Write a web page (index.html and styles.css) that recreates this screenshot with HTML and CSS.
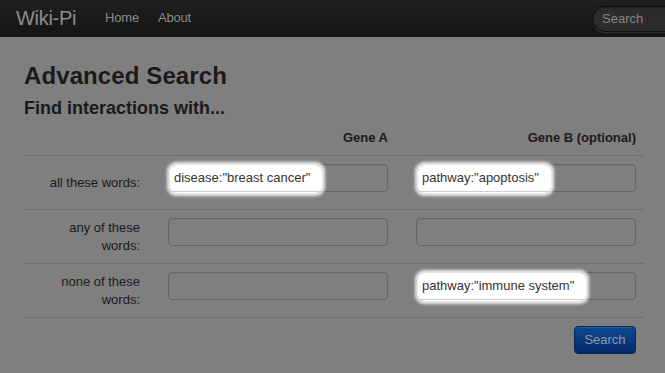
FILE: index.html
```html
<!DOCTYPE html>
<html lang="en">
<head>
<meta charset="utf-8">
<title>Wiki-Pi – Advanced Search</title>
<link rel="stylesheet" href="styles.css">
</head>
<body>
<header class="navbar">
  <a class="brand" href="#">Wiki-Pi</a>
  <nav class="nav">
    <a href="#">Home</a>
    <a href="#">About</a>
  </nav>
  <div class="nav-search"><input type="text" placeholder="Search"></div>
</header>
<main class="container">
  <h1 class="title">Advanced Search</h1>
  <h3 class="subtitle">Find interactions with...</h3>
  <div class="search-table">
    <div class="row head">
      <div class="label"></div>
      <div class="col">Gene A</div>
      <div class="col col-b">Gene B (optional)</div>
    </div>
    <div class="row">
      <div class="label">all these words:</div>
      <div class="col"><div class="field"><input type="text"><span class="spot">disease:"breast cancer"</span></div></div>
      <div class="col col-b"><div class="field"><input type="text"><span class="spot">pathway:"apoptosis"</span></div></div>
    </div>
    <div class="row">
      <div class="label">any of these<br>words:</div>
      <div class="col"><div class="field"><input type="text"></div></div>
      <div class="col col-b"><div class="field"><input type="text"></div></div>
    </div>
    <div class="row last">
      <div class="label">none of these<br>words:</div>
      <div class="col"><div class="field"><input type="text"></div></div>
      <div class="col col-b"><div class="field"><input type="text"><span class="spot">pathway:"immune system"</span></div></div>
    </div>
  </div>
  <div class="actions"><button class="btn-primary" type="button">Search</button></div>
</main>
</body>
</html>
```
FILE: styles.css
```css
* { box-sizing: border-box; }
html, body { margin: 0; padding: 0; }
body {
  background: #7f7f7f;
  font-family: "Liberation Sans", Arial, Helvetica, sans-serif;
  font-size: 13px;
  line-height: 18px;
  color: #1a1a1a;
  overflow: hidden;
}

.navbar {
  height: 37px;
  background: linear-gradient(to bottom, #1f1f1f, #141414);
  display: flex;
  align-items: center;
  padding: 0 0 2px 16px;
  overflow: hidden;
}
.brand {
  font-size: 20px;
  line-height: 20px;
  color: #8e8e8e;
  text-decoration: none;
  margin-right: 29px;
  letter-spacing: -0.3px;
}
.nav { display: flex; gap: 19px; }
.nav a {
  color: #8a8a8a;
  text-decoration: none;
  font-size: 13px;
  line-height: 18px;
  letter-spacing: -0.2px;
}
.nav-search {
  margin-left: auto;
  margin-right: -80px;
  flex-shrink: 0;
  padding-top: 2px;
}
.nav-search input {
  width: 153px;
  height: 26px;
  border-radius: 14px;
  border: 1px solid #0c0c0c;
  background: #2c2c2c;
  box-shadow: inset 0 1px 2px rgba(0,0,0,.3), 0 1px 0 rgba(255,255,255,.12);
  color: #ccc;
  font-family: inherit;
  font-size: 13px;
  padding: 0 9px;
  outline: none;
}
.nav-search input::placeholder { color: #858585; }

.container {
  width: 620px;
  margin-left: 24px;
  padding-top: 24px;
}
.title {
  margin: 0;
  font-size: 24px;
  line-height: 30px;
  font-weight: bold;
  color: #1a1a1a;
  letter-spacing: 0.1px;
}
.subtitle {
  margin: 6px 0 0;
  font-size: 18px;
  line-height: 22px;
  font-weight: bold;
  color: #1a1a1a;
}

.search-table { margin-top: 2px; }
.row {
  display: grid;
  grid-template-columns: 136px 236px 248px;
  border-top: 1px solid #6e6e6e;
}
.row.head { border-top: none; font-weight: bold; }
.row.last { border-bottom: 1px solid #6e6e6e; }
.row.head .col { padding: 8px; text-align: right; }
.label {
  align-self: center;
  text-align: right;
  padding: 0 20px 0 8px;
}
.row .col { padding: 8px 8px 7px; }
.row:not(.head) .col { display: flex; justify-content: flex-end; }
.field {
  position: relative;
  width: 220px;
  margin-bottom: 10px;
}
.field input {
  display: block;
  width: 220px;
  height: 28px;
  border: 1px solid #646464;
  border-radius: 4px;
  background: #7f7f7f;
  box-shadow: inset 0 1px 1px rgba(0,0,0,.06);
  outline: none;
}
.spot {
  position: absolute;
  left: 2px;
  top: 1px;
  height: 28px;
  padding: 0 12px 0 4px;
  line-height: 26px;
  font-size: 13px;
  color: #333;
  white-space: nowrap;
  border-radius: 6px;
  background: linear-gradient(to bottom, #fff 0, #fff 26px, #cfcfcf 26px, #cfcfcf 27px, #fff 27px);
  box-shadow: 0 0 3px 3px rgba(255,255,255,.85);
}

.actions {
  display: flex;
  justify-content: flex-end;
  padding: 8px 8px 0 0;
}
.btn-primary {
  width: 62px;
  height: 28px;
  border: 1px solid #072456;
  border-radius: 4px;
  background: linear-gradient(to bottom, #0c4a8e, #05296b);
  color: #8e99a9;
  font-family: inherit;
  font-size: 13px;
  line-height: 18px;
  padding: 0;
  box-shadow: inset 0 1px 0 rgba(255,255,255,.1);
}
```
